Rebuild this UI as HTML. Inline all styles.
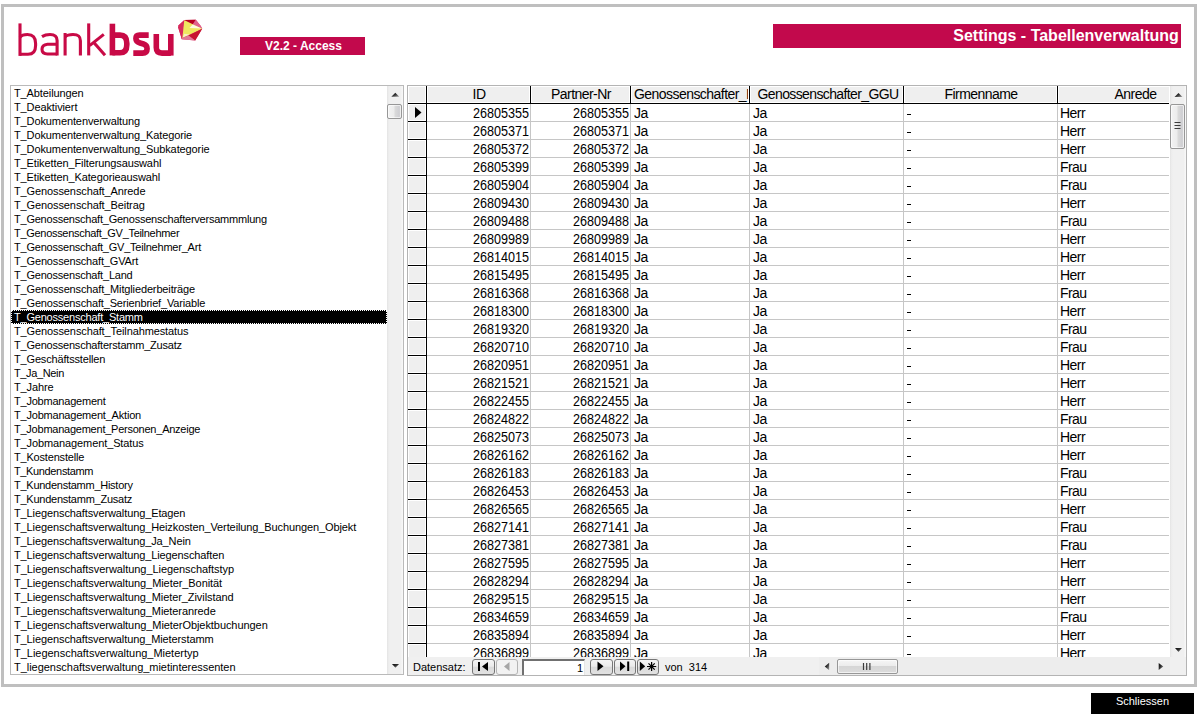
<!DOCTYPE html><html><head><meta charset="utf-8"><title>Settings - Tabellenverwaltung</title><style>
*{margin:0;padding:0;box-sizing:border-box}
html,body{width:1204px;height:720px;overflow:hidden;background:#fff}
body{position:relative;font-family:"Liberation Sans",sans-serif;color:#000}
.a{position:absolute}
.frame{left:1px;top:4px;width:1196px;height:683px;border:3px solid #bfbfbf}
.vbar{left:240px;top:37px;width:125px;height:18px;background:#c2094c;color:#fff;font-weight:bold;font-size:12px;line-height:18px;text-align:center;padding-left:2px}
.tbar{left:773px;top:24px;width:408px;height:24px;background:#c2094c;color:#fff;font-weight:bold;font-size:16px;line-height:24px;text-align:right;padding-right:2.2px}
.lb{left:10px;top:85px;width:394px;height:590px;border:1px solid #bababa;background:#fff;overflow:hidden}
.li{position:absolute;left:3px;height:14px;line-height:14px;font-size:11px;white-space:nowrap;letter-spacing:-0.11px}
.sel{left:11px;top:310px;width:376px;height:14px;background:#000}
.sb{background:#f0f0f0}
.grid{left:407px;top:85px;width:780px;height:591px;border:1px solid #b4b4b4;background:#fff}
.hl{height:1px}
.vl{width:1px}
.c{position:absolute;height:17px;line-height:17px;font-size:14px;white-space:nowrap;overflow:hidden;letter-spacing:-0.55px}
.d{letter-spacing:0;transform:scaleX(0.9);transform-origin:100% 50%}
.r{text-align:right}
.ctr{text-align:center}
.nav{font-size:11px;line-height:18px;height:18px}
.btn{position:absolute;top:659px;height:16px;border:1px solid #767676;border-radius:3px;background:linear-gradient(#f4f4f4 0%,#ebebeb 45%,#dadada 50%,#e2e2e2 100%)}
.thumb{border:1px solid #979797;border-radius:2px;box-shadow:inset 0 0 0 1px rgba(255,255,255,.6);background:linear-gradient(90deg,#f3f3f3 0%,#ececec 45%,#dadada 55%,#cfcfd3 85%,#dadada 100%)}
.schl{left:1091px;top:693px;width:103px;height:21px;background:#000;color:#fff;font-size:11px;line-height:17px;text-align:center}
</style></head><body>
<svg width="0" height="0" style="position:absolute"><defs><linearGradient id="ag" x1="0" y1="0" x2="1" y2="1"><stop offset="0" stop-color="#0c0c0c"/><stop offset="0.45" stop-color="#2e2e2e"/><stop offset="1" stop-color="#a8a8a8"/></linearGradient></defs></svg>
<div class="a frame"></div>
<svg class="a" style="left:0;top:0" width="210" height="62" viewBox="0 0 210 62">
<g fill="none" stroke="#c80a46" stroke-width="3.1">
<path d="M20 23.4V55.9"/>
<path d="M20 37.2C21.5 35.2 24 34.5 27.5 34.5C33.2 34.5 35.6 37.8 35.6 43.5V45.5C35.6 51.5 33 54.3 28 54.3H20"/>
<path d="M42 36.6C44.5 35 47 34.5 50 34.5C55 34.5 57.1 36.2 57.1 40.5V55.5"/>
<path d="M57.1 44.2H47.5C43.7 44.6 42 46.5 42 49.3C42 52.5 44 54 47.5 54H57.1"/>
<path d="M65.1 33V55.5"/>
<path d="M65.1 36.8C67 35 70 34.5 73 34.5C78.2 34.5 80.4 36.2 80.4 40.8V55.5"/>
<path d="M88.7 23.4V55.4"/>
<path d="M89.6 45.6L103.8 34.4"/>
<path d="M93.6 42.2L105 55.2"/>
</g>
<g fill="none" stroke="#c80a46" stroke-width="5.6">
<path d="M112.4 23.7V55.4"/>
<path d="M112.4 35.1H120C124.6 35.1 126.8 38.2 126.8 43.2V44.7C126.8 49.7 124.6 52.8 120 52.8H112.4"/>
<path d="M148.7 35.1H139.5C136.5 35.1 135.9 37 135.9 38.6C135.9 41 137.3 42.2 140 43L143.5 44C146.2 44.9 147.1 46.2 147.1 48.7C147.1 51.2 145.8 53.1 142.5 53.1H133.3"/>
<path d="M156.3 34V47.5C156.3 51.5 158.2 53.1 162 53.1H170.8"/>
<path d="M170.8 34V55.6"/>
</g>
<polygon points="178.7,25.3 184.3,20.1 195.8,19.7 200.8,26.1 202.2,28.8 195.2,40.5 181.8,39.3 178.1,27.3" fill="#d83a6c"/>
<polygon points="178.7,25.3 184.3,20.1 182.4,38 181.8,39.3 178.1,27.3" fill="#d82a5c"/>
<polygon points="184.3,20.1 195.8,19.7 192.7,24.5" fill="#b8001e"/>
<polygon points="195.8,19.7 200.8,26.1 202.2,28.8 192.7,24.5" fill="#e0628c"/>
<polygon points="184.3,20.3 202.2,28.8 182.4,38" fill="#efe760"/><polygon points="182.6,37.6 189.5,34.6 184.2,33.8" fill="#f6f0c8"/>
<polygon points="192.7,24.4 201.8,28.4 189.5,27.9" fill="#fdfbe0"/>
<polygon points="202.2,28.8 195.2,40.5 188.5,35.5" fill="#c81430"/>
<polygon points="181.8,39.3 195.2,40.5 188.5,35.5 182.4,38" fill="#e27898"/>
</svg>
<div class="a vbar">V2.2 - Access</div>
<div class="a tbar">Settings - Tabellenverwaltung</div>
<div class="a lb">
<div class="li" style="top:0px;letter-spacing:-0.110px">T_Abteilungen</div>
<div class="li" style="top:14px;letter-spacing:-0.110px">T_Deaktiviert</div>
<div class="li" style="top:28px;letter-spacing:-0.110px">T_Dokumentenverwaltung</div>
<div class="li" style="top:42px;letter-spacing:-0.110px">T_Dokumentenverwaltung_Kategorie</div>
<div class="li" style="top:56px;letter-spacing:-0.110px">T_Dokumentenverwaltung_Subkategorie</div>
<div class="li" style="top:70px;letter-spacing:-0.110px">T_Etiketten_Filterungsauswahl</div>
<div class="li" style="top:84px;letter-spacing:-0.110px">T_Etiketten_Kategorieauswahl</div>
<div class="li" style="top:98px;letter-spacing:-0.110px">T_Genossenschaft_Anrede</div>
<div class="li" style="top:112px;letter-spacing:-0.110px">T_Genossenschaft_Beitrag</div>
<div class="li" style="top:126px;letter-spacing:-0.224px">T_Genossenschaft_Genossenschafterversammmlung</div>
<div class="li" style="top:140px;letter-spacing:-0.300px">T_Genossenschaft_GV_Teilnehmer</div>
<div class="li" style="top:154px;letter-spacing:-0.219px">T_Genossenschaft_GV_Teilnehmer_Art</div>
<div class="li" style="top:168px;letter-spacing:-0.158px">T_Genossenschaft_GVArt</div>
<div class="li" style="top:182px;letter-spacing:-0.210px">T_Genossenschaft_Land</div>
<div class="li" style="top:196px;letter-spacing:-0.139px">T_Genossenschaft_Mitgliederbeiträge</div>
<div class="li" style="top:210px;letter-spacing:-0.166px">T_Genossenschaft_Serienbrief_Variable</div>
<div class="li" style="top:224px;left:0;width:376px;background:#000;color:#fff;padding-left:3px;outline:1px dotted #fff;outline-offset:-1px;letter-spacing:-0.205px">T_Genossenschaft_Stamm</div>
<div class="li" style="top:238px;letter-spacing:-0.110px">T_Genossenschaft_Teilnahmestatus</div>
<div class="li" style="top:252px;letter-spacing:-0.213px">T_Genossenschafterstamm_Zusatz</div>
<div class="li" style="top:266px;letter-spacing:-0.169px">T_Geschäftsstellen</div>
<div class="li" style="top:280px;letter-spacing:-0.360px">T_Ja_Nein</div>
<div class="li" style="top:294px;letter-spacing:-0.110px">T_Jahre</div>
<div class="li" style="top:308px;letter-spacing:-0.217px">T_Jobmanagement</div>
<div class="li" style="top:322px;letter-spacing:-0.205px">T_Jobmanagement_Aktion</div>
<div class="li" style="top:336px;letter-spacing:-0.239px">T_Jobmanagement_Personen_Anzeige</div>
<div class="li" style="top:350px;letter-spacing:-0.110px">T_Jobmanagement_Status</div>
<div class="li" style="top:364px;letter-spacing:-0.187px">T_Kostenstelle</div>
<div class="li" style="top:378px;letter-spacing:-0.360px">T_Kundenstamm</div>
<div class="li" style="top:392px;letter-spacing:-0.260px">T_Kundenstamm_History</div>
<div class="li" style="top:406px;letter-spacing:-0.247px">T_Kundenstamm_Zusatz</div>
<div class="li" style="top:420px;letter-spacing:-0.110px">T_Liegenschaftsverwaltung_Etagen</div>
<div class="li" style="top:434px;letter-spacing:-0.110px">T_Liegenschaftsverwaltung_Heizkosten_Verteilung_Buchungen_Objekt</div>
<div class="li" style="top:448px;letter-spacing:-0.110px">T_Liegenschaftsverwaltung_Ja_Nein</div>
<div class="li" style="top:462px;letter-spacing:-0.110px">T_Liegenschaftsverwaltung_Liegenschaften</div>
<div class="li" style="top:476px;letter-spacing:-0.061px">T_Liegenschaftsverwaltung_Liegenschaftstyp</div>
<div class="li" style="top:490px;letter-spacing:-0.072px">T_Liegenschaftsverwaltung_Mieter_Bonität</div>
<div class="li" style="top:504px;letter-spacing:-0.086px">T_Liegenschaftsverwaltung_Mieter_Zivilstand</div>
<div class="li" style="top:518px;letter-spacing:-0.083px">T_Liegenschaftsverwaltung_Mieteranrede</div>
<div class="li" style="top:532px;letter-spacing:-0.067px">T_Liegenschaftsverwaltung_MieterObjektbuchungen</div>
<div class="li" style="top:546px;letter-spacing:-0.110px">T_Liegenschaftsverwaltung_Mieterstamm</div>
<div class="li" style="top:560px;letter-spacing:-0.022px">T_Liegenschaftsverwaltung_Mietertyp</div>
<div class="li" style="top:574px;letter-spacing:-0.039px">T_liegenschaftsverwaltung_mietinteressenten</div>
<div class="a sb" style="left:376px;top:0;width:16px;height:588px;background:linear-gradient(90deg,#e2e2e2 0,#ebebeb 1px,#f0f0f0 3px,#f0f0f0 14px,#f7f7f7 15px)"></div>
<svg class="a" style="left:376px;top:0" width="16" height="588"><path d="M4.3 10.8L8.3 6.8L12.3 10.8Z" fill="url(#ag)" stroke="#fff" stroke-opacity="0.5" stroke-width="0.6" paint-order="stroke"/><path d="M4.9 578L8.5 581.8L12.1 578Z" fill="url(#ag)" stroke="#fff" stroke-opacity="0.5" stroke-width="0.6" paint-order="stroke"/></svg>
<div class="a thumb" style="left:376px;top:18px;width:15px;height:15px"></div>
</div>
<div class="a grid"></div>
<div class="a" style="left:409px;top:87px;width:16px;height:15px;background:#efefef"></div>
<div class="a" style="left:428px;top:87px;width:101px;height:15px;background:#efefef"></div>
<div class="a" style="left:532px;top:87px;width:97px;height:15px;background:#efefef"></div>
<div class="a" style="left:632px;top:87px;width:116px;height:15px;background:#efefef"></div>
<div class="a" style="left:751px;top:87px;width:151px;height:15px;background:#efefef"></div>
<div class="a" style="left:905px;top:87px;width:151px;height:15px;background:#efefef"></div>
<div class="a" style="left:1059px;top:87px;width:110px;height:15px;background:#efefef"></div>
<div class="a" style="left:409px;top:105px;width:16px;height:15px;background:#efefef"></div>
<div class="a" style="left:409px;top:123px;width:16px;height:15px;background:#efefef"></div>
<div class="a" style="left:409px;top:141px;width:16px;height:15px;background:#efefef"></div>
<div class="a" style="left:409px;top:159px;width:16px;height:15px;background:#efefef"></div>
<div class="a" style="left:409px;top:177px;width:16px;height:15px;background:#efefef"></div>
<div class="a" style="left:409px;top:195px;width:16px;height:15px;background:#efefef"></div>
<div class="a" style="left:409px;top:213px;width:16px;height:15px;background:#efefef"></div>
<div class="a" style="left:409px;top:231px;width:16px;height:15px;background:#efefef"></div>
<div class="a" style="left:409px;top:249px;width:16px;height:15px;background:#efefef"></div>
<div class="a" style="left:409px;top:267px;width:16px;height:15px;background:#efefef"></div>
<div class="a" style="left:409px;top:285px;width:16px;height:15px;background:#efefef"></div>
<div class="a" style="left:409px;top:303px;width:16px;height:15px;background:#efefef"></div>
<div class="a" style="left:409px;top:321px;width:16px;height:15px;background:#efefef"></div>
<div class="a" style="left:409px;top:339px;width:16px;height:15px;background:#efefef"></div>
<div class="a" style="left:409px;top:357px;width:16px;height:15px;background:#efefef"></div>
<div class="a" style="left:409px;top:375px;width:16px;height:15px;background:#efefef"></div>
<div class="a" style="left:409px;top:393px;width:16px;height:15px;background:#efefef"></div>
<div class="a" style="left:409px;top:411px;width:16px;height:15px;background:#efefef"></div>
<div class="a" style="left:409px;top:429px;width:16px;height:15px;background:#efefef"></div>
<div class="a" style="left:409px;top:447px;width:16px;height:15px;background:#efefef"></div>
<div class="a" style="left:409px;top:465px;width:16px;height:15px;background:#efefef"></div>
<div class="a" style="left:409px;top:483px;width:16px;height:15px;background:#efefef"></div>
<div class="a" style="left:409px;top:501px;width:16px;height:15px;background:#efefef"></div>
<div class="a" style="left:409px;top:519px;width:16px;height:15px;background:#efefef"></div>
<div class="a" style="left:409px;top:537px;width:16px;height:15px;background:#efefef"></div>
<div class="a" style="left:409px;top:555px;width:16px;height:15px;background:#efefef"></div>
<div class="a" style="left:409px;top:573px;width:16px;height:15px;background:#efefef"></div>
<div class="a" style="left:409px;top:591px;width:16px;height:15px;background:#efefef"></div>
<div class="a" style="left:409px;top:609px;width:16px;height:15px;background:#efefef"></div>
<div class="a" style="left:409px;top:627px;width:16px;height:15px;background:#efefef"></div>
<div class="a" style="left:409px;top:645px;width:16px;height:12px;background:#efefef"></div>
<div class="a hl" style="left:408px;top:103px;width:761px;background:#000"></div>
<div class="a vl" style="left:426px;top:86px;height:17px;background:#000"></div>
<div class="a vl" style="left:530px;top:86px;height:17px;background:#000"></div>
<div class="a vl" style="left:630px;top:86px;height:17px;background:#000"></div>
<div class="a vl" style="left:749px;top:86px;height:17px;background:#000"></div>
<div class="a vl" style="left:903px;top:86px;height:17px;background:#000"></div>
<div class="a vl" style="left:1057px;top:86px;height:17px;background:#000"></div>
<div class="a vl" style="left:426px;top:104px;height:553px;background:#000"></div>
<div class="a vl" style="left:530px;top:104px;height:553px;background:#c6c6c6"></div>
<div class="a vl" style="left:630px;top:104px;height:553px;background:#c6c6c6"></div>
<div class="a vl" style="left:749px;top:104px;height:553px;background:#c6c6c6"></div>
<div class="a vl" style="left:903px;top:104px;height:553px;background:#c6c6c6"></div>
<div class="a vl" style="left:1057px;top:104px;height:553px;background:#c6c6c6"></div>
<div class="a hl" style="left:408px;top:121px;width:18px;background:#000"></div>
<div class="a hl" style="left:427px;top:121px;width:742px;background:#c6c6c6"></div>
<div class="a hl" style="left:408px;top:139px;width:18px;background:#000"></div>
<div class="a hl" style="left:427px;top:139px;width:742px;background:#c6c6c6"></div>
<div class="a hl" style="left:408px;top:157px;width:18px;background:#000"></div>
<div class="a hl" style="left:427px;top:157px;width:742px;background:#c6c6c6"></div>
<div class="a hl" style="left:408px;top:175px;width:18px;background:#000"></div>
<div class="a hl" style="left:427px;top:175px;width:742px;background:#c6c6c6"></div>
<div class="a hl" style="left:408px;top:193px;width:18px;background:#000"></div>
<div class="a hl" style="left:427px;top:193px;width:742px;background:#c6c6c6"></div>
<div class="a hl" style="left:408px;top:211px;width:18px;background:#000"></div>
<div class="a hl" style="left:427px;top:211px;width:742px;background:#c6c6c6"></div>
<div class="a hl" style="left:408px;top:229px;width:18px;background:#000"></div>
<div class="a hl" style="left:427px;top:229px;width:742px;background:#c6c6c6"></div>
<div class="a hl" style="left:408px;top:247px;width:18px;background:#000"></div>
<div class="a hl" style="left:427px;top:247px;width:742px;background:#c6c6c6"></div>
<div class="a hl" style="left:408px;top:265px;width:18px;background:#000"></div>
<div class="a hl" style="left:427px;top:265px;width:742px;background:#c6c6c6"></div>
<div class="a hl" style="left:408px;top:283px;width:18px;background:#000"></div>
<div class="a hl" style="left:427px;top:283px;width:742px;background:#c6c6c6"></div>
<div class="a hl" style="left:408px;top:301px;width:18px;background:#000"></div>
<div class="a hl" style="left:427px;top:301px;width:742px;background:#c6c6c6"></div>
<div class="a hl" style="left:408px;top:319px;width:18px;background:#000"></div>
<div class="a hl" style="left:427px;top:319px;width:742px;background:#c6c6c6"></div>
<div class="a hl" style="left:408px;top:337px;width:18px;background:#000"></div>
<div class="a hl" style="left:427px;top:337px;width:742px;background:#c6c6c6"></div>
<div class="a hl" style="left:408px;top:355px;width:18px;background:#000"></div>
<div class="a hl" style="left:427px;top:355px;width:742px;background:#c6c6c6"></div>
<div class="a hl" style="left:408px;top:373px;width:18px;background:#000"></div>
<div class="a hl" style="left:427px;top:373px;width:742px;background:#c6c6c6"></div>
<div class="a hl" style="left:408px;top:391px;width:18px;background:#000"></div>
<div class="a hl" style="left:427px;top:391px;width:742px;background:#c6c6c6"></div>
<div class="a hl" style="left:408px;top:409px;width:18px;background:#000"></div>
<div class="a hl" style="left:427px;top:409px;width:742px;background:#c6c6c6"></div>
<div class="a hl" style="left:408px;top:427px;width:18px;background:#000"></div>
<div class="a hl" style="left:427px;top:427px;width:742px;background:#c6c6c6"></div>
<div class="a hl" style="left:408px;top:445px;width:18px;background:#000"></div>
<div class="a hl" style="left:427px;top:445px;width:742px;background:#c6c6c6"></div>
<div class="a hl" style="left:408px;top:463px;width:18px;background:#000"></div>
<div class="a hl" style="left:427px;top:463px;width:742px;background:#c6c6c6"></div>
<div class="a hl" style="left:408px;top:481px;width:18px;background:#000"></div>
<div class="a hl" style="left:427px;top:481px;width:742px;background:#c6c6c6"></div>
<div class="a hl" style="left:408px;top:499px;width:18px;background:#000"></div>
<div class="a hl" style="left:427px;top:499px;width:742px;background:#c6c6c6"></div>
<div class="a hl" style="left:408px;top:517px;width:18px;background:#000"></div>
<div class="a hl" style="left:427px;top:517px;width:742px;background:#c6c6c6"></div>
<div class="a hl" style="left:408px;top:535px;width:18px;background:#000"></div>
<div class="a hl" style="left:427px;top:535px;width:742px;background:#c6c6c6"></div>
<div class="a hl" style="left:408px;top:553px;width:18px;background:#000"></div>
<div class="a hl" style="left:427px;top:553px;width:742px;background:#c6c6c6"></div>
<div class="a hl" style="left:408px;top:571px;width:18px;background:#000"></div>
<div class="a hl" style="left:427px;top:571px;width:742px;background:#c6c6c6"></div>
<div class="a hl" style="left:408px;top:589px;width:18px;background:#000"></div>
<div class="a hl" style="left:427px;top:589px;width:742px;background:#c6c6c6"></div>
<div class="a hl" style="left:408px;top:607px;width:18px;background:#000"></div>
<div class="a hl" style="left:427px;top:607px;width:742px;background:#c6c6c6"></div>
<div class="a hl" style="left:408px;top:625px;width:18px;background:#000"></div>
<div class="a hl" style="left:427px;top:625px;width:742px;background:#c6c6c6"></div>
<div class="a hl" style="left:408px;top:643px;width:18px;background:#000"></div>
<div class="a hl" style="left:427px;top:643px;width:742px;background:#c6c6c6"></div>
<div class="c ctr" style="left:429px;top:86px;width:100px;">ID</div>
<div class="c ctr" style="left:533px;top:86px;width:96px;">Partner-Nr</div>
<div class="c " style="left:633px;top:86px;width:115px;padding-left:1px;">Genossenschafter_I</div>
<div class="c ctr" style="left:752px;top:86px;width:150px;letter-spacing:-0.62px;padding-left:2px;">Genossenschafter_GGU</div>
<div class="c ctr" style="left:906px;top:86px;width:150px;">Firmenname</div>
<div class="c ctr" style="left:1058px;top:86px;width:112px"><div style="position:absolute;left:0;width:155px;text-align:center">Anrede</div></div>
<div class="c r d" style="left:427px;width:102px;top:104px;height:17px;line-height:19px;padding-right:0px">26805355</div>
<div class="c r d" style="left:531px;width:98px;top:104px;height:17px;line-height:19px;padding-right:0px">26805355</div>
<div class="c" style="left:634px;width:114px;top:104px;height:17px;line-height:19px">Ja</div>
<div class="c" style="left:753px;width:149px;top:104px;height:17px;line-height:19px">Ja</div>
<div class="a" style="left:907px;top:114px;width:4px;height:1px;background:#000"></div>
<div class="c" style="left:1060px;width:109px;top:104px;height:17px;line-height:19px">Herr</div>
<div class="c r d" style="left:427px;width:102px;top:122px;height:17px;line-height:19px;padding-right:0px">26805371</div>
<div class="c r d" style="left:531px;width:98px;top:122px;height:17px;line-height:19px;padding-right:0px">26805371</div>
<div class="c" style="left:634px;width:114px;top:122px;height:17px;line-height:19px">Ja</div>
<div class="c" style="left:753px;width:149px;top:122px;height:17px;line-height:19px">Ja</div>
<div class="a" style="left:907px;top:132px;width:4px;height:1px;background:#000"></div>
<div class="c" style="left:1060px;width:109px;top:122px;height:17px;line-height:19px">Herr</div>
<div class="c r d" style="left:427px;width:102px;top:140px;height:17px;line-height:19px;padding-right:0px">26805372</div>
<div class="c r d" style="left:531px;width:98px;top:140px;height:17px;line-height:19px;padding-right:0px">26805372</div>
<div class="c" style="left:634px;width:114px;top:140px;height:17px;line-height:19px">Ja</div>
<div class="c" style="left:753px;width:149px;top:140px;height:17px;line-height:19px">Ja</div>
<div class="a" style="left:907px;top:150px;width:4px;height:1px;background:#000"></div>
<div class="c" style="left:1060px;width:109px;top:140px;height:17px;line-height:19px">Herr</div>
<div class="c r d" style="left:427px;width:102px;top:158px;height:17px;line-height:19px;padding-right:0px">26805399</div>
<div class="c r d" style="left:531px;width:98px;top:158px;height:17px;line-height:19px;padding-right:0px">26805399</div>
<div class="c" style="left:634px;width:114px;top:158px;height:17px;line-height:19px">Ja</div>
<div class="c" style="left:753px;width:149px;top:158px;height:17px;line-height:19px">Ja</div>
<div class="a" style="left:907px;top:168px;width:4px;height:1px;background:#000"></div>
<div class="c" style="left:1060px;width:109px;top:158px;height:17px;line-height:19px">Frau</div>
<div class="c r d" style="left:427px;width:102px;top:176px;height:17px;line-height:19px;padding-right:0px">26805904</div>
<div class="c r d" style="left:531px;width:98px;top:176px;height:17px;line-height:19px;padding-right:0px">26805904</div>
<div class="c" style="left:634px;width:114px;top:176px;height:17px;line-height:19px">Ja</div>
<div class="c" style="left:753px;width:149px;top:176px;height:17px;line-height:19px">Ja</div>
<div class="a" style="left:907px;top:186px;width:4px;height:1px;background:#000"></div>
<div class="c" style="left:1060px;width:109px;top:176px;height:17px;line-height:19px">Frau</div>
<div class="c r d" style="left:427px;width:102px;top:194px;height:17px;line-height:19px;padding-right:0px">26809430</div>
<div class="c r d" style="left:531px;width:98px;top:194px;height:17px;line-height:19px;padding-right:0px">26809430</div>
<div class="c" style="left:634px;width:114px;top:194px;height:17px;line-height:19px">Ja</div>
<div class="c" style="left:753px;width:149px;top:194px;height:17px;line-height:19px">Ja</div>
<div class="a" style="left:907px;top:204px;width:4px;height:1px;background:#000"></div>
<div class="c" style="left:1060px;width:109px;top:194px;height:17px;line-height:19px">Herr</div>
<div class="c r d" style="left:427px;width:102px;top:212px;height:17px;line-height:19px;padding-right:0px">26809488</div>
<div class="c r d" style="left:531px;width:98px;top:212px;height:17px;line-height:19px;padding-right:0px">26809488</div>
<div class="c" style="left:634px;width:114px;top:212px;height:17px;line-height:19px">Ja</div>
<div class="c" style="left:753px;width:149px;top:212px;height:17px;line-height:19px">Ja</div>
<div class="a" style="left:907px;top:222px;width:4px;height:1px;background:#000"></div>
<div class="c" style="left:1060px;width:109px;top:212px;height:17px;line-height:19px">Frau</div>
<div class="c r d" style="left:427px;width:102px;top:230px;height:17px;line-height:19px;padding-right:0px">26809989</div>
<div class="c r d" style="left:531px;width:98px;top:230px;height:17px;line-height:19px;padding-right:0px">26809989</div>
<div class="c" style="left:634px;width:114px;top:230px;height:17px;line-height:19px">Ja</div>
<div class="c" style="left:753px;width:149px;top:230px;height:17px;line-height:19px">Ja</div>
<div class="a" style="left:907px;top:240px;width:4px;height:1px;background:#000"></div>
<div class="c" style="left:1060px;width:109px;top:230px;height:17px;line-height:19px">Herr</div>
<div class="c r d" style="left:427px;width:102px;top:248px;height:17px;line-height:19px;padding-right:0px">26814015</div>
<div class="c r d" style="left:531px;width:98px;top:248px;height:17px;line-height:19px;padding-right:0px">26814015</div>
<div class="c" style="left:634px;width:114px;top:248px;height:17px;line-height:19px">Ja</div>
<div class="c" style="left:753px;width:149px;top:248px;height:17px;line-height:19px">Ja</div>
<div class="a" style="left:907px;top:258px;width:4px;height:1px;background:#000"></div>
<div class="c" style="left:1060px;width:109px;top:248px;height:17px;line-height:19px">Herr</div>
<div class="c r d" style="left:427px;width:102px;top:266px;height:17px;line-height:19px;padding-right:0px">26815495</div>
<div class="c r d" style="left:531px;width:98px;top:266px;height:17px;line-height:19px;padding-right:0px">26815495</div>
<div class="c" style="left:634px;width:114px;top:266px;height:17px;line-height:19px">Ja</div>
<div class="c" style="left:753px;width:149px;top:266px;height:17px;line-height:19px">Ja</div>
<div class="a" style="left:907px;top:276px;width:4px;height:1px;background:#000"></div>
<div class="c" style="left:1060px;width:109px;top:266px;height:17px;line-height:19px">Herr</div>
<div class="c r d" style="left:427px;width:102px;top:284px;height:17px;line-height:19px;padding-right:0px">26816368</div>
<div class="c r d" style="left:531px;width:98px;top:284px;height:17px;line-height:19px;padding-right:0px">26816368</div>
<div class="c" style="left:634px;width:114px;top:284px;height:17px;line-height:19px">Ja</div>
<div class="c" style="left:753px;width:149px;top:284px;height:17px;line-height:19px">Ja</div>
<div class="a" style="left:907px;top:294px;width:4px;height:1px;background:#000"></div>
<div class="c" style="left:1060px;width:109px;top:284px;height:17px;line-height:19px">Frau</div>
<div class="c r d" style="left:427px;width:102px;top:302px;height:17px;line-height:19px;padding-right:0px">26818300</div>
<div class="c r d" style="left:531px;width:98px;top:302px;height:17px;line-height:19px;padding-right:0px">26818300</div>
<div class="c" style="left:634px;width:114px;top:302px;height:17px;line-height:19px">Ja</div>
<div class="c" style="left:753px;width:149px;top:302px;height:17px;line-height:19px">Ja</div>
<div class="a" style="left:907px;top:312px;width:4px;height:1px;background:#000"></div>
<div class="c" style="left:1060px;width:109px;top:302px;height:17px;line-height:19px">Herr</div>
<div class="c r d" style="left:427px;width:102px;top:320px;height:17px;line-height:19px;padding-right:0px">26819320</div>
<div class="c r d" style="left:531px;width:98px;top:320px;height:17px;line-height:19px;padding-right:0px">26819320</div>
<div class="c" style="left:634px;width:114px;top:320px;height:17px;line-height:19px">Ja</div>
<div class="c" style="left:753px;width:149px;top:320px;height:17px;line-height:19px">Ja</div>
<div class="a" style="left:907px;top:330px;width:4px;height:1px;background:#000"></div>
<div class="c" style="left:1060px;width:109px;top:320px;height:17px;line-height:19px">Frau</div>
<div class="c r d" style="left:427px;width:102px;top:338px;height:17px;line-height:19px;padding-right:0px">26820710</div>
<div class="c r d" style="left:531px;width:98px;top:338px;height:17px;line-height:19px;padding-right:0px">26820710</div>
<div class="c" style="left:634px;width:114px;top:338px;height:17px;line-height:19px">Ja</div>
<div class="c" style="left:753px;width:149px;top:338px;height:17px;line-height:19px">Ja</div>
<div class="a" style="left:907px;top:348px;width:4px;height:1px;background:#000"></div>
<div class="c" style="left:1060px;width:109px;top:338px;height:17px;line-height:19px">Frau</div>
<div class="c r d" style="left:427px;width:102px;top:356px;height:17px;line-height:19px;padding-right:0px">26820951</div>
<div class="c r d" style="left:531px;width:98px;top:356px;height:17px;line-height:19px;padding-right:0px">26820951</div>
<div class="c" style="left:634px;width:114px;top:356px;height:17px;line-height:19px">Ja</div>
<div class="c" style="left:753px;width:149px;top:356px;height:17px;line-height:19px">Ja</div>
<div class="a" style="left:907px;top:366px;width:4px;height:1px;background:#000"></div>
<div class="c" style="left:1060px;width:109px;top:356px;height:17px;line-height:19px">Herr</div>
<div class="c r d" style="left:427px;width:102px;top:374px;height:17px;line-height:19px;padding-right:0px">26821521</div>
<div class="c r d" style="left:531px;width:98px;top:374px;height:17px;line-height:19px;padding-right:0px">26821521</div>
<div class="c" style="left:634px;width:114px;top:374px;height:17px;line-height:19px">Ja</div>
<div class="c" style="left:753px;width:149px;top:374px;height:17px;line-height:19px">Ja</div>
<div class="a" style="left:907px;top:384px;width:4px;height:1px;background:#000"></div>
<div class="c" style="left:1060px;width:109px;top:374px;height:17px;line-height:19px">Herr</div>
<div class="c r d" style="left:427px;width:102px;top:392px;height:17px;line-height:19px;padding-right:0px">26822455</div>
<div class="c r d" style="left:531px;width:98px;top:392px;height:17px;line-height:19px;padding-right:0px">26822455</div>
<div class="c" style="left:634px;width:114px;top:392px;height:17px;line-height:19px">Ja</div>
<div class="c" style="left:753px;width:149px;top:392px;height:17px;line-height:19px">Ja</div>
<div class="a" style="left:907px;top:402px;width:4px;height:1px;background:#000"></div>
<div class="c" style="left:1060px;width:109px;top:392px;height:17px;line-height:19px">Herr</div>
<div class="c r d" style="left:427px;width:102px;top:410px;height:17px;line-height:19px;padding-right:0px">26824822</div>
<div class="c r d" style="left:531px;width:98px;top:410px;height:17px;line-height:19px;padding-right:0px">26824822</div>
<div class="c" style="left:634px;width:114px;top:410px;height:17px;line-height:19px">Ja</div>
<div class="c" style="left:753px;width:149px;top:410px;height:17px;line-height:19px">Ja</div>
<div class="a" style="left:907px;top:420px;width:4px;height:1px;background:#000"></div>
<div class="c" style="left:1060px;width:109px;top:410px;height:17px;line-height:19px">Frau</div>
<div class="c r d" style="left:427px;width:102px;top:428px;height:17px;line-height:19px;padding-right:0px">26825073</div>
<div class="c r d" style="left:531px;width:98px;top:428px;height:17px;line-height:19px;padding-right:0px">26825073</div>
<div class="c" style="left:634px;width:114px;top:428px;height:17px;line-height:19px">Ja</div>
<div class="c" style="left:753px;width:149px;top:428px;height:17px;line-height:19px">Ja</div>
<div class="a" style="left:907px;top:438px;width:4px;height:1px;background:#000"></div>
<div class="c" style="left:1060px;width:109px;top:428px;height:17px;line-height:19px">Herr</div>
<div class="c r d" style="left:427px;width:102px;top:446px;height:17px;line-height:19px;padding-right:0px">26826162</div>
<div class="c r d" style="left:531px;width:98px;top:446px;height:17px;line-height:19px;padding-right:0px">26826162</div>
<div class="c" style="left:634px;width:114px;top:446px;height:17px;line-height:19px">Ja</div>
<div class="c" style="left:753px;width:149px;top:446px;height:17px;line-height:19px">Ja</div>
<div class="a" style="left:907px;top:456px;width:4px;height:1px;background:#000"></div>
<div class="c" style="left:1060px;width:109px;top:446px;height:17px;line-height:19px">Herr</div>
<div class="c r d" style="left:427px;width:102px;top:464px;height:17px;line-height:19px;padding-right:0px">26826183</div>
<div class="c r d" style="left:531px;width:98px;top:464px;height:17px;line-height:19px;padding-right:0px">26826183</div>
<div class="c" style="left:634px;width:114px;top:464px;height:17px;line-height:19px">Ja</div>
<div class="c" style="left:753px;width:149px;top:464px;height:17px;line-height:19px">Ja</div>
<div class="a" style="left:907px;top:474px;width:4px;height:1px;background:#000"></div>
<div class="c" style="left:1060px;width:109px;top:464px;height:17px;line-height:19px">Frau</div>
<div class="c r d" style="left:427px;width:102px;top:482px;height:17px;line-height:19px;padding-right:0px">26826453</div>
<div class="c r d" style="left:531px;width:98px;top:482px;height:17px;line-height:19px;padding-right:0px">26826453</div>
<div class="c" style="left:634px;width:114px;top:482px;height:17px;line-height:19px">Ja</div>
<div class="c" style="left:753px;width:149px;top:482px;height:17px;line-height:19px">Ja</div>
<div class="a" style="left:907px;top:492px;width:4px;height:1px;background:#000"></div>
<div class="c" style="left:1060px;width:109px;top:482px;height:17px;line-height:19px">Frau</div>
<div class="c r d" style="left:427px;width:102px;top:500px;height:17px;line-height:19px;padding-right:0px">26826565</div>
<div class="c r d" style="left:531px;width:98px;top:500px;height:17px;line-height:19px;padding-right:0px">26826565</div>
<div class="c" style="left:634px;width:114px;top:500px;height:17px;line-height:19px">Ja</div>
<div class="c" style="left:753px;width:149px;top:500px;height:17px;line-height:19px">Ja</div>
<div class="a" style="left:907px;top:510px;width:4px;height:1px;background:#000"></div>
<div class="c" style="left:1060px;width:109px;top:500px;height:17px;line-height:19px">Herr</div>
<div class="c r d" style="left:427px;width:102px;top:518px;height:17px;line-height:19px;padding-right:0px">26827141</div>
<div class="c r d" style="left:531px;width:98px;top:518px;height:17px;line-height:19px;padding-right:0px">26827141</div>
<div class="c" style="left:634px;width:114px;top:518px;height:17px;line-height:19px">Ja</div>
<div class="c" style="left:753px;width:149px;top:518px;height:17px;line-height:19px">Ja</div>
<div class="a" style="left:907px;top:528px;width:4px;height:1px;background:#000"></div>
<div class="c" style="left:1060px;width:109px;top:518px;height:17px;line-height:19px">Frau</div>
<div class="c r d" style="left:427px;width:102px;top:536px;height:17px;line-height:19px;padding-right:0px">26827381</div>
<div class="c r d" style="left:531px;width:98px;top:536px;height:17px;line-height:19px;padding-right:0px">26827381</div>
<div class="c" style="left:634px;width:114px;top:536px;height:17px;line-height:19px">Ja</div>
<div class="c" style="left:753px;width:149px;top:536px;height:17px;line-height:19px">Ja</div>
<div class="a" style="left:907px;top:546px;width:4px;height:1px;background:#000"></div>
<div class="c" style="left:1060px;width:109px;top:536px;height:17px;line-height:19px">Frau</div>
<div class="c r d" style="left:427px;width:102px;top:554px;height:17px;line-height:19px;padding-right:0px">26827595</div>
<div class="c r d" style="left:531px;width:98px;top:554px;height:17px;line-height:19px;padding-right:0px">26827595</div>
<div class="c" style="left:634px;width:114px;top:554px;height:17px;line-height:19px">Ja</div>
<div class="c" style="left:753px;width:149px;top:554px;height:17px;line-height:19px">Ja</div>
<div class="a" style="left:907px;top:564px;width:4px;height:1px;background:#000"></div>
<div class="c" style="left:1060px;width:109px;top:554px;height:17px;line-height:19px">Herr</div>
<div class="c r d" style="left:427px;width:102px;top:572px;height:17px;line-height:19px;padding-right:0px">26828294</div>
<div class="c r d" style="left:531px;width:98px;top:572px;height:17px;line-height:19px;padding-right:0px">26828294</div>
<div class="c" style="left:634px;width:114px;top:572px;height:17px;line-height:19px">Ja</div>
<div class="c" style="left:753px;width:149px;top:572px;height:17px;line-height:19px">Ja</div>
<div class="a" style="left:907px;top:582px;width:4px;height:1px;background:#000"></div>
<div class="c" style="left:1060px;width:109px;top:572px;height:17px;line-height:19px">Herr</div>
<div class="c r d" style="left:427px;width:102px;top:590px;height:17px;line-height:19px;padding-right:0px">26829515</div>
<div class="c r d" style="left:531px;width:98px;top:590px;height:17px;line-height:19px;padding-right:0px">26829515</div>
<div class="c" style="left:634px;width:114px;top:590px;height:17px;line-height:19px">Ja</div>
<div class="c" style="left:753px;width:149px;top:590px;height:17px;line-height:19px">Ja</div>
<div class="a" style="left:907px;top:600px;width:4px;height:1px;background:#000"></div>
<div class="c" style="left:1060px;width:109px;top:590px;height:17px;line-height:19px">Herr</div>
<div class="c r d" style="left:427px;width:102px;top:608px;height:17px;line-height:19px;padding-right:0px">26834659</div>
<div class="c r d" style="left:531px;width:98px;top:608px;height:17px;line-height:19px;padding-right:0px">26834659</div>
<div class="c" style="left:634px;width:114px;top:608px;height:17px;line-height:19px">Ja</div>
<div class="c" style="left:753px;width:149px;top:608px;height:17px;line-height:19px">Ja</div>
<div class="a" style="left:907px;top:618px;width:4px;height:1px;background:#000"></div>
<div class="c" style="left:1060px;width:109px;top:608px;height:17px;line-height:19px">Frau</div>
<div class="c r d" style="left:427px;width:102px;top:626px;height:17px;line-height:19px;padding-right:0px">26835894</div>
<div class="c r d" style="left:531px;width:98px;top:626px;height:17px;line-height:19px;padding-right:0px">26835894</div>
<div class="c" style="left:634px;width:114px;top:626px;height:17px;line-height:19px">Ja</div>
<div class="c" style="left:753px;width:149px;top:626px;height:17px;line-height:19px">Ja</div>
<div class="a" style="left:907px;top:636px;width:4px;height:1px;background:#000"></div>
<div class="c" style="left:1060px;width:109px;top:626px;height:17px;line-height:19px">Herr</div>
<div class="c r d" style="left:427px;width:102px;top:644px;height:13px;line-height:19px;padding-right:0px">26836899</div>
<div class="c r d" style="left:531px;width:98px;top:644px;height:13px;line-height:19px;padding-right:0px">26836899</div>
<div class="c" style="left:634px;width:114px;top:644px;height:13px;line-height:19px">Ja</div>
<div class="c" style="left:753px;width:149px;top:644px;height:13px;line-height:19px">Ja</div>
<div class="a" style="left:907px;top:654px;width:4px;height:1px;background:#000"></div>
<div class="c" style="left:1060px;width:109px;top:644px;height:13px;line-height:19px">Herr</div>
<svg class="a" style="left:408px;top:104px" width="18" height="17"><path d="M7 3L13.5 8.5L7 14Z" fill="#000"/></svg>
<div class="a sb" style="left:1170px;top:86px;width:16px;height:571px;background:linear-gradient(90deg,#e2e2e2 0,#ebebeb 1px,#f0f0f0 3px,#f0f0f0 14px,#f7f7f7 15px)"></div>
<svg class="a" style="left:1170px;top:86px" width="16" height="571"><path d="M4.5 11L8.5 7L12.5 11Z" fill="url(#ag)" stroke="#fff" stroke-opacity="0.5" stroke-width="0.6" paint-order="stroke"/><path d="M5 562L8.5 566L12 562Z" fill="url(#ag)" stroke="#fff" stroke-opacity="0.5" stroke-width="0.6" paint-order="stroke"/></svg>
<div class="a thumb" style="left:1170px;top:104px;width:15px;height:45px"></div>
<svg class="a" style="left:1174px;top:121px" width="8" height="8"><path d="M0.5 1.5H6.5M0.5 4.5H6.5M0.5 7.5H6.5" stroke="#3c3c3c" stroke-width="1.2"/></svg>
<div class="a sb" style="left:408px;top:657px;width:778px;height:18px"></div>
<div class="a nav" style="left:413px;top:658px">Datensatz:</div>
<div class="btn" style="left:472px;width:23px"><svg class="a" style="left:0;top:0" width="21" height="14"><path d="M6 2V11" stroke="#000" stroke-width="2"/><path d="M15 2L9 6.5L15 11Z" fill="#000"/></svg></div>
<div class="btn" style="left:496px;width:22px;background:#f2f2f2;border-color:#b4b4b4"><svg class="a" style="left:0;top:0" width="20" height="14"><path d="M12.5 2L7 6.5L12.5 11Z" fill="#a6a6a6"/></svg></div>
<div class="a" style="left:522px;top:659px;width:63px;height:16px;background:#fff;border-top:2px solid #707070;border-left:2px solid #707070;border-right:1px solid #e6e6e6"></div>
<div class="a nav" style="left:523px;top:659px;width:60px;text-align:right">1</div>
<div class="btn" style="left:590px;width:23px"><svg class="a" style="left:0;top:0" width="21" height="14"><path d="M6.5 1.5L12.5 6.3L6.5 11Z" fill="#000"/></svg></div>
<div class="btn" style="left:614px;width:22px"><svg class="a" style="left:0;top:0" width="20" height="14"><path d="M5 1.5L10.5 6.3L5 11Z" fill="#000"/><path d="M13.2 1.5V11" stroke="#000" stroke-width="2"/></svg></div>
<div class="btn" style="left:637px;width:22px"><svg class="a" style="left:0;top:0" width="20" height="14"><path d="M1.8 1.5L7.2 6.3L1.8 11Z" fill="#000"/><path d="M13.6 2V11M9 6.5H18.2M10.5 3.3L16.7 9.7M16.7 3.3L10.5 9.7" stroke="#000" stroke-width="1.2"/></svg></div>
<div class="a nav" style="left:665px;top:658px">von&nbsp; 314</div>
<div class="a" style="left:819px;top:657px;width:351px;height:18px;background:#ededed"></div>
<svg class="a" style="left:819px;top:657px" width="351" height="18"><path d="M5.7 9.5L10.2 5.7V13.2Z" fill="url(#ag)" stroke="#fff" stroke-opacity="0.5" stroke-width="0.6" paint-order="stroke"/><path d="M339.7 5.9L344.3 9.5L339.7 13.1Z" fill="url(#ag)" stroke="#fff" stroke-opacity="0.5" stroke-width="0.6" paint-order="stroke"/></svg>
<div class="a thumb" style="left:837px;top:659px;width:61px;height:15px;background:linear-gradient(#f6f6f6 0%,#ececec 45%,#d6d6d6 50%,#dcdcdc 100%)"></div>
<svg class="a" style="left:862px;top:663px" width="10" height="8"><path d="M1.5 0V7M4.7 0V7M7.9 0V7" stroke="#3c3c3c" stroke-width="1.2"/></svg>
<div class="a schl">Schliessen</div>
</body></html>
